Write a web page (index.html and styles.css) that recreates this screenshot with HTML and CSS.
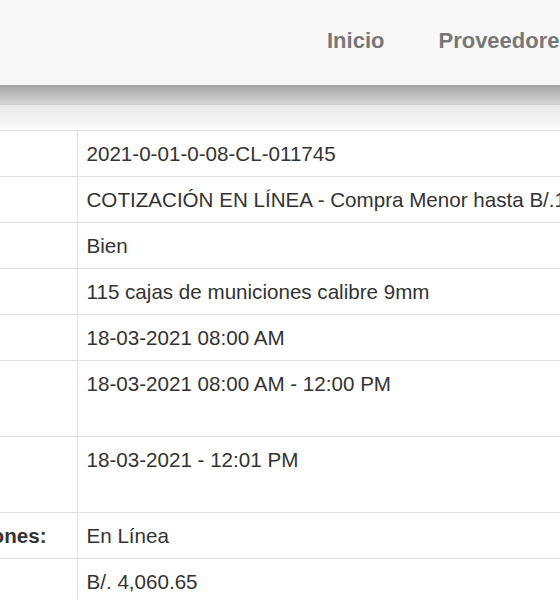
FILE: index.html
```html
<!DOCTYPE html>
<html lang="es">
<head>
  <meta charset="UTF-8" />
  <meta name="viewport" content="width=device-width, initial-scale=1.0"/>
  <title>Detalle del acto público</title>

  <link rel="stylesheet" href="styles.css">

</head>
<body>
  <nav class="navbar">
    <a href="#" class="nav-link">Inicio</a>
    <a href="#" class="nav-link">Proveedores</a>
    <a href="#" class="nav-link">Entidades</a>
  </nav>

  <div class="nav-shadow"></div>
  <div class="sub-band"></div>

  <table class="detail">
    <colgroup>
      <col class="col-label">
      <col class="col-value">
    </colgroup>
    <tr>
      <th>Número:</th>
      <td>2021-0-01-0-08-CL-011745</td>
    </tr>
    <tr>
      <th>Tipo de Procedimiento:</th>
      <td>COTIZACIÓN EN LÍNEA - Compra Menor hasta B/.10,000.00</td>
    </tr>
    <tr>
      <th>Objeto Contractual:</th>
      <td>Bien</td>
    </tr>
    <tr>
      <th>Descripción:</th>
      <td>115 cajas de municiones calibre 9mm</td>
    </tr>
    <tr>
      <th>Fecha de publicación:</th>
      <td>18-03-2021 08:00 AM</td>
    </tr>
    <tr class="tall">
      <th>Fecha de presentación:</th>
      <td>18-03-2021 08:00 AM - 12:00 PM</td>
    </tr>
    <tr class="tall">
      <th>Fecha de apertura:</th>
      <td>18-03-2021 - 12:01 PM</td>
    </tr>
    <tr>
      <th>Forma de presentación de cotizaciones:</th>
      <td>En Línea</td>
    </tr>
    <tr>
      <th>Precio de referencia:</th>
      <td>B/. 4,060.65</td>
    </tr>
    <tr>
      <th>Entidad:</th>
      <td>Ministerio de Seguridad Pública</td>
    </tr>
  </table>
</body>
</html>
```

FILE: styles.css
```css
html, body {
  overflow: hidden;
}

body {
  margin: 0;
  font-family: "Liberation Sans", Arial, sans-serif;
  color: #333;
  background-color: #fff;
}

.navbar {
  display: flex;
  height: 85px;
  box-sizing: border-box;
  padding: 26px 0 0 300px;
  background-color: #f8f8f8;
  white-space: nowrap;
}

.nav-link {
  padding: 0 27px;
  font-size: 22px;
  font-weight: bold;
  line-height: 30px;
  color: #777;
  text-decoration: none;
}

.nav-shadow {
  height: 19px;
  background: linear-gradient(#a3a3a3, #d6d6d6);
  border-bottom: 1px solid #cfcfcf;
}

.sub-band {
  height: 24px;
  background: linear-gradient(#e9e9e9, #fbfbfb);
  border-bottom: 1px solid #fff;
}

.detail {
  width: 1200px;
  margin-left: -354px;
  border-collapse: collapse;
  table-layout: fixed;
  font-size: 20.6px;
  line-height: 29px;
}

.col-label {
  width: 431px;
}

.detail th,
.detail td {
  padding: 8px;
  border-top: 1px solid #e0e0e0;
  text-align: left;
  vertical-align: top;
  white-space: nowrap;
}

.detail th {
  font-weight: bold;
}

.detail td {
  padding-left: 9px;
  border-left: 1px solid #e0e0e0;
}

.tall th,
.tall td {
  padding-bottom: 38px;
}
```
